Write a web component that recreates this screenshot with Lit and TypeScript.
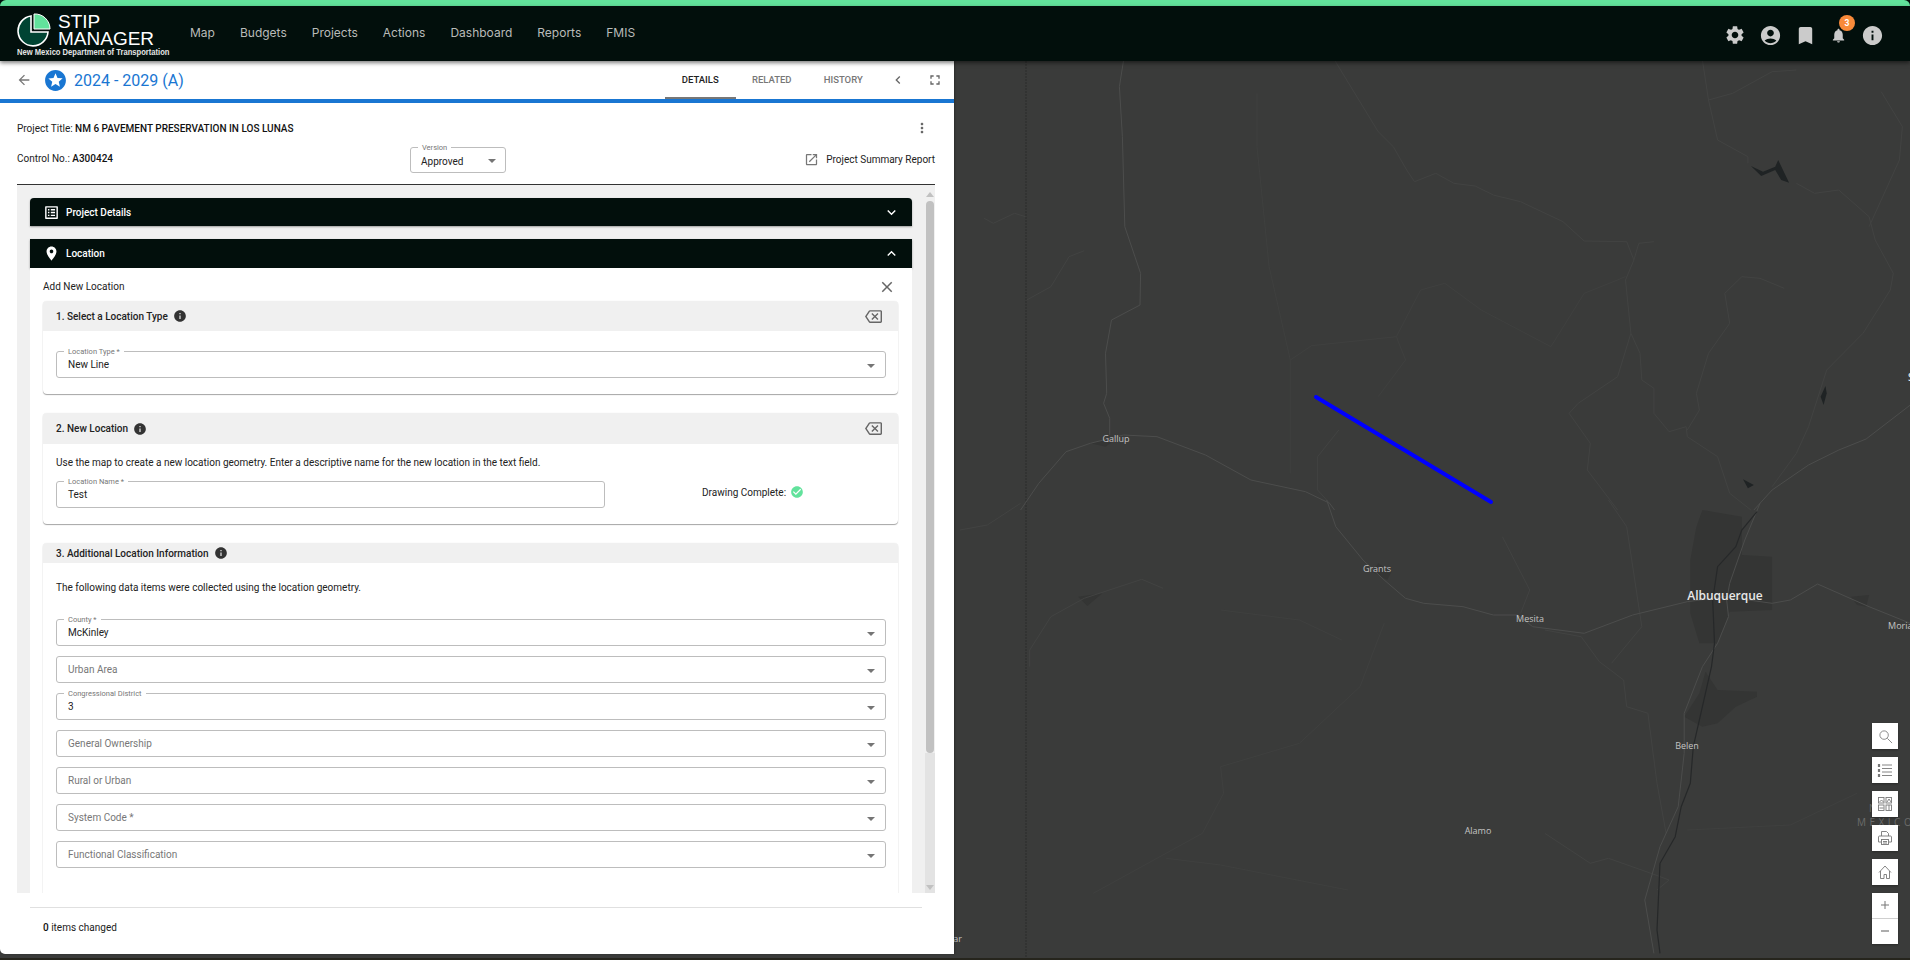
import { LitElement, css, html, svg } from 'lit';
import { customElement } from 'lit/decorators.js';

type Pt = [number, number];

// map traces were read off two crops, so each gets its own conversion to page px
const upper = (pts: Pt[]) => pts.map(([x, y]) => `${(960 + x / 1.65).toFixed(1)},${(60 + y / 3).toFixed(1)}`).join(' ');
const lower = (pts: Pt[]) => pts.map(([x, y]) => `${(960 + x / 1.65).toFixed(1)},${(500 + y / 3).toFixed(1)}`).join(' ');

const ROADS: string[] = [
   upper([[270, 0], [263, 80], [268, 230], [272, 500], [298, 640], [297, 735], [250, 780], [240, 880], [242, 1000], [237, 1030], [247, 1075], [247, 1125]]),
   upper([[100, 1350], [130, 1270], [175, 1175], [215, 1150], [270, 1125], [325, 1130], [405, 1185], [480, 1260], [570, 1295], [610, 1330], [618, 1350]]),
   lower([[605, 0], [620, 80], [665, 180], [700, 240], [735, 295], [765, 310], [830, 320], [880, 345], [920, 345], [945, 380], [1030, 400], [1110, 345], [1200, 305], [1262, 290], [1340, 310], [1370, 300], [1415, 252], [1500, 320], [1568, 370]]),
   upper([[1568, 1035], [1495, 1137], [1450, 1170], [1400, 1215], [1340, 1290], [1310, 1350]]),
   lower([[1320, 10], [1295, 120], [1270, 250], [1265, 300], [1268, 350], [1250, 430], [1225, 500], [1195, 640], [1195, 760], [1185, 920], [1155, 1040], [1130, 1200], [1145, 1360]]),
];

const RIVERS: string[] = [
   upper([[618, 0], [690, 215], [715, 260], [737, 330], [750, 365], [785, 340], [815, 370], [850, 378], [880, 405], [925, 425], [995, 485], [1030, 543], [1100, 545], [1112, 600], [1098, 660], [1107, 820], [1122, 880], [1125, 960], [1145, 985], [1145, 1060], [1170, 1115], [1198, 1100], [1200, 1130], [1250, 1190], [1270, 1300], [1305, 1350]]),
   upper([[1380, 370], [1410, 400], [1450, 390], [1500, 470], [1510, 540], [1540, 640], [1535, 690], [1490, 820], [1430, 930], [1400, 1100], [1380, 1180], [1340, 1280]]),
   upper([[1225, 0], [1235, 120], [1275, 100], [1340, 35], [1380, 30]]),
   upper([[1235, 120], [1250, 240], [1300, 290], [1300, 310]]),
   upper([[1520, 95], [1555, 200], [1550, 300], [1500, 500]]),
   upper([[1360, 685], [1320, 655], [1290, 650], [1262, 700], [1270, 790], [1235, 880], [1215, 1000], [1220, 1050], [1200, 1110]]),
   upper([[1112, 600], [1120, 550], [1145, 545]]),
   upper([[1107, 820], [1085, 950], [1020, 1030], [1005, 1060], [1040, 1150], [1035, 1230], [1085, 1350]]),
   upper([[205, 572], [180, 590], [150, 680], [110, 720]]),
   upper([[40, 475], [55, 490], [90, 460], [108, 470]]),
   upper([[625, 1110], [590, 1190], [590, 1290], [610, 1330]]),
   lower([[0, 90], [45, 75], [100, 10]]),
   lower([[205, 295], [300, 238], [335, 265]]),
   lower([[205, 295], [150, 350], [115, 450], [115, 500]]),
   lower([[895, 110], [940, 270], [925, 340]]),
   lower([[1075, 490], [1125, 380], [1100, 80], [1070, 0]]),
   lower([[965, 390], [1025, 410], [1055, 485], [1095, 540], [1100, 620], [1135, 640], [1150, 850], [1165, 1000]]),
   lower([[965, 1000], [1040, 1090], [1070, 1075], [1140, 1120], [1170, 1140], [1150, 1170]]),
];

// barely visible county and minor road traces
const FAINT: string[] = [
   upper([[545, 1240], [545, 900], [510, 620], [490, 260], [490, 100]]),
   upper([[760, 690], [800, 670], [860, 750], [975, 860]]),
   upper([[1098, 650], [1030, 700], [975, 860]]),
   upper([[545, 900], [580, 857], [720, 830], [760, 690]]),
   upper([[720, 830], [735, 900], [690, 1010]]),
   lower([[700, 370], [660, 560], [560, 730], [430, 800], [435, 880], [400, 1000], [220, 1180]]),
   lower([[430, 330], [560, 360], [630, 420]]),
   lower([[340, 1075], [430, 1095], [640, 1170]]),
   lower([[1200, 990], [1370, 975], [1480, 880]]),
];

const GRANDE = lower([[1315, 35], [1290, 90], [1280, 140], [1250, 200], [1242, 300], [1245, 430], [1240, 500], [1225, 620], [1210, 740], [1205, 850], [1190, 920], [1180, 1010], [1155, 1090], [1150, 1290], [1155, 1360]]);

const URBAN: string[] = [
   lower([[1225, 30], [1290, 50], [1290, 165], [1340, 170], [1340, 330], [1270, 335], [1250, 430], [1220, 430], [1205, 340], [1205, 180], [1215, 80]]),
   lower([[1230, 515], [1250, 570], [1315, 575], [1315, 590], [1280, 620], [1250, 670], [1225, 680], [1195, 650], [1220, 580]]),
   lower([[690, 190], [712, 215], [705, 240], [680, 215]]),
   lower([[195, 290], [235, 280], [210, 318]]),
   lower([[1470, 290], [1500, 285], [1495, 320], [1480, 315]]),
   upper([[215, 1150], [260, 1135], [240, 1160]]),
];

const LAKES: string[] = [
   upper([[1305, 318], [1325, 335], [1345, 320], [1350, 300], [1368, 368], [1355, 360], [1345, 330], [1322, 348]]),
   upper([[1428, 978], [1420, 1010], [1425, 1035], [1430, 1000]]),
   upper([[1292, 1258], [1310, 1275], [1300, 1285]]),
];

const LABELS: [string, number, number, number][] = [
   ['Gallup', 1116, 442, 9],
   ['Grants', 1377, 572, 9],
   ['Mesita', 1530, 622, 9],
   ['Moriarty', 1906, 629, 9],
   ['Belen', 1687, 749, 9],
   ['Alamo', 1478, 834, 9],
   ['Sugar', 950, 942, 9],
];

const icon = (d: string, size: number, cls = '') => html`<svg class=${cls} width=${size} height=${size} viewBox="0 0 24 24" fill="currentColor"><path d=${d}></path></svg>`;

const I = {
   gear: 'M19.14 12.94c.04-.3.06-.61.06-.94 0-.32-.02-.64-.07-.94l2.03-1.58c.18-.14.23-.41.12-.61l-1.92-3.32c-.12-.22-.37-.29-.59-.22l-2.39.96c-.5-.38-1.03-.7-1.62-.94l-.36-2.54c-.04-.24-.24-.41-.48-.41h-3.84c-.24 0-.43.17-.47.41l-.36 2.54c-.59.24-1.13.57-1.62.94l-2.39-.96c-.22-.08-.47 0-.59.22L2.74 8.87c-.12.21-.08.47.12.61l2.03 1.58c-.05.3-.09.63-.09.94s.02.64.07.94l-2.03 1.58c-.18.14-.23.41-.12.61l1.92 3.32c.12.22.37.29.59.22l2.39-.96c.5.38 1.03.7 1.62.94l.36 2.54c.05.24.24.41.48.41h3.84c.24 0 .44-.17.47-.41l.36-2.54c.59-.24 1.13-.56 1.62-.94l2.39.96c.22.08.47 0 .59-.22l1.92-3.32c.12-.22.07-.47-.12-.61l-2.01-1.58zM12 15.6c-1.98 0-3.6-1.62-3.6-3.6s1.62-3.6 3.6-3.6 3.6 1.62 3.6 3.6-1.62 3.6-3.6 3.6z',
   account: 'M12 2C6.48 2 2 6.48 2 12s4.48 10 10 10 10-4.48 10-10S17.52 2 12 2zm0 4c1.93 0 3.5 1.57 3.5 3.5S13.93 13 12 13s-3.5-1.57-3.5-3.5S10.07 6 12 6zm0 14c-2.03 0-4.43-.82-6.14-2.88C7.55 15.8 9.68 15 12 15s4.45.8 6.14 2.12C16.43 19.18 14.03 20 12 20z',
   bookmark: 'M17 3H7c-1.1 0-2 .9-2 2v16l7-3 7 3V5c0-1.1-.9-2-2-2z',
   bell: 'M12 22c1.1 0 2-.9 2-2h-4c0 1.1.9 2 2 2zm6-6v-5c0-3.07-1.63-5.64-4.5-6.32V4c0-.83-.67-1.5-1.5-1.5s-1.5.67-1.5 1.5v.68C7.64 5.36 6 7.92 6 11v5l-2 2v1h16v-1l-2-2z',
   info: 'M12 2C6.48 2 2 6.48 2 12s4.48 10 10 10 10-4.48 10-10S17.52 2 12 2zm1 15h-2v-6h2v6zm0-8h-2V7h2v2z',
   back: 'M20 11H7.83l5.59-5.59L12 4l-8 8 8 8 1.41-1.41L7.83 13H20v-2z',
   star: 'M11.99 2C6.47 2 2 6.48 2 12s4.47 10 9.99 10C17.52 22 22 17.52 22 12S17.52 2 11.99 2zm4.24 16L12 15.45 7.77 18l1.12-4.81-3.73-3.23 4.92-.42L12 5l1.92 4.53 4.92.42-3.73 3.23L16.23 18z',
   left: 'M15.41 7.41L14 6l-6 6 6 6 1.41-1.41L10.83 12z',
   full: 'M7 14H5v5h5v-2H7v-3zm-2-4h2V7h3V5H5v5zm12 7h-3v2h5v-5h-2v3zM14 5v2h3v3h2V5h-5z',
   more: 'M12 8c1.1 0 2-.9 2-2s-.9-2-2-2-2 .9-2 2 .9 2 2 2zm0 2c-1.1 0-2 .9-2 2s.9 2 2 2 2-.9 2-2-.9-2-2-2zm0 6c-1.1 0-2 .9-2 2s.9 2 2 2 2-.9 2-2-.9-2-2-2z',
   open: 'M19 19H5V5h7V3H5c-1.11 0-2 .9-2 2v14c0 1.1.89 2 2 2h14c1.1 0 2-.9 2-2v-7h-2v7zM14 3v2h3.59l-9.83 9.83 1.41 1.41L19 6.41V10h2V3h-7z',
   down: 'M16.59 8.59L12 13.17 7.41 8.59 6 10l6 6 6-6z',
   up: 'M12 8l-6 6 1.41 1.41L12 10.83l4.59 4.58L18 14z',
   close: 'M19 6.41L17.59 5 12 10.59 6.41 5 5 6.41 10.59 12 5 17.59 6.41 19 12 13.41 17.59 19 19 17.59 13.41 12z',
   clear: 'M22 3H7c-.69 0-1.23.35-1.59.88L0 12l5.41 8.11c.36.53.9.89 1.59.89h15c1.1 0 2-.9 2-2V5c0-1.1-.9-2-2-2zm0 16H7.07L2.4 12l4.66-7H22v14zm-11.59-2L14 13.41 17.59 17 19 15.59 15.41 12 19 8.41 17.59 7 14 10.59 10.41 7 9 8.41 12.59 12 9 15.59z',
   check: 'M12 2C6.48 2 2 6.48 2 12s4.48 10 10 10 10-4.48 10-10S17.52 2 12 2zm-2 15l-5-5 1.41-1.41L10 14.17l7.59-7.59L19 8l-9 9z',
   place: 'M12 2C8.13 2 5 5.13 5 9c0 5.25 7 13 7 13s7-7.75 7-13c0-3.87-3.13-7-7-7zm0 9.5c-1.38 0-2.5-1.12-2.5-2.5s1.12-2.5 2.5-2.5 2.5 1.12 2.5 2.5-1.12 2.5-2.5 2.5z',
   list: 'M19 5v14H5V5h14m1.1-2H3.9c-.5 0-.9.4-.9.9v16.2c0 .4.4.9.9.9h16.2c.4 0 .9-.5.9-.9V3.9c0-.5-.5-.9-.9-.9zM11 7h6v2h-6V7zm0 4h6v2h-6v-2zm0 4h6v2h-6v-2zM7 7h2v2H7V7zm0 4h2v2H7v-2zm0 4h2v2H7v-2z',
};

const NAV = ['Map', 'Budgets', 'Projects', 'Actions', 'Dashboard', 'Reports', 'FMIS'];

@customElement('app-root')
export class AppRoot extends LitElement {
   field(label: string, value = '', caret = true) {
      // no value means the label sits inside the box as a placeholder
      return html`
      <div class="field">
        ${value ? html`<span class="notch">${label}</span><span class="value">${value}</span>` : html`<span class="placeholder">${label}</span>`}
        ${caret ? html`<i class="caret"></i>` : ''}
      </div>`;
   }

   cardHead(title: string, clearable = true) {
      return html`
      <div class="card-head">
        <span>${title}</span>
        ${icon(I.info, 14, 'tip')}
        ${clearable ? icon(I.clear, 17, 'clear') : ''}
      </div>`;
   }

   renderMap() {
      return html`
      <svg class="map-art" viewBox="954 61 956 899" fill="none">
        ${URBAN.map(p => svg`<polygon points=${p} fill="#343534"></polygon>`)}
        <line x1="1026" y1="61" x2="1026" y2="960" stroke="#2b2c2b" stroke-dasharray="2 1"></line>
        ${FAINT.map(p => svg`<polyline points=${p} stroke="#3f403f" stroke-width="1"></polyline>`)}
        ${RIVERS.map(p => svg`<polyline points=${p} stroke="#424342" stroke-width="1"></polyline>`)}
        ${ROADS.map(p => svg`<polyline points=${p} stroke="#4c4d4c" stroke-width="1"></polyline>`)}
        <polyline points=${GRANDE} stroke="#262829" stroke-width="1.2"></polyline>
        ${LAKES.map(p => svg`<polygon points=${p} fill="#1f2324"></polygon>`)}
        <line x1="1316" y1="397" x2="1491" y2="502" stroke="#0000ff" stroke-width="4" stroke-linecap="round"></line>
        ${LABELS.map(([t, x, y, s]) => svg`<text x=${x} y=${y} font-size=${s} text-anchor="middle" class="place">${t}</text>`)}
        <text x="1725" y="600" font-size="12" text-anchor="middle" class="place big">Albuquerque</text>
        <text x="1908" y="381" font-size="10" class="place big">Santa Fe</text>
        <text x="1869" y="812" font-size="10" class="state">NEW</text>
        <text x="1857" y="826" font-size="10" class="state">MEXICO</text>
      </svg>`;
   }

   render() {
      return html`
      <div class="strip"></div>
      <header class="nav">
        <div class="logo">
          <div class="logo-top">
            <svg width="34" height="34" viewBox="0 0 34 34">
              <path d="M14 3A15 15 0 1 0 31 19H14Z" fill="#004433" stroke="#fff" stroke-width="1.6"></path>
              <path d="M17 1A15 15 0 0 1 33 16H17Z" fill="#62e29c" stroke="#fff" stroke-width="1"></path>
            </svg>
            <div class="wordmark"><span>STIP</span><span>MANAGER</span></div>
          </div>
          <div class="logo-sub">New Mexico Department of Transportation</div>
        </div>
        <nav class="links">${NAV.map(n => html`<a>${n}</a>`)}</nav>
        <div class="tools">
          ${icon(I.gear, 22)}
          ${icon(I.account, 23)}
          ${icon(I.bookmark, 23, 'mark')}
          <span class="bell">${icon(I.bell, 17)}<b class="badge">3</b></span>
          ${icon(I.info, 23)}
        </div>
      </header>

      <main class="main">
        <div class="map">
          ${this.renderMap()}
          <div class="widgets">
            <button class="w">
              <svg width="15" height="15" viewBox="0 0 16 16" fill="none" stroke="currentColor" stroke-width=".9"><circle cx="6.5" cy="6.5" r="4.5"></circle><path d="M10 10l5 5"></path></svg>
            </button>
            <button class="w">
              <svg width="16" height="16" viewBox="0 0 16 16" fill="none" stroke="currentColor" stroke-width=".9"><path d="M5 3h10M5 6.5h10M5 10h10M5 13.5h10"></path><path d="M2 2v3M2 7v3M2 12v3" stroke-width="2.2"></path></svg>
            </button>
            <button class="w">
              <svg width="16" height="16" viewBox="0 0 16 16" fill="none" stroke="currentColor" stroke-width=".9"><rect x="1.5" y="1.5" width="5.5" height="5.5"></rect><rect x="9" y="1.5" width="5.5" height="5.5"></rect><rect x="1.5" y="9" width="5.5" height="5.5"></rect><rect x="9" y="9" width="5.5" height="5.5"></rect><path d="M2.5 6l2-2 2 2M10 6l2-3 2 3M2.5 12h4M12 9v5"></path></svg>
            </button>
            <button class="w">
              <svg width="16" height="16" viewBox="0 0 16 16" fill="none" stroke="currentColor" stroke-width=".9"><path d="M4.5 6V1.5h5l2 2V6M4 12H1.5V7c0-.6.4-1 1-1h11c.6 0 1 .4 1 1v5H12"></path><rect x="4.5" y="9.5" width="7" height="5"></rect><path d="M6 11.5h4M6 13h4"></path></svg>
            </button>
            <button class="w">
              <svg width="16" height="16" viewBox="0 0 16 16" fill="none" stroke="currentColor" stroke-width=".9"><path d="M2 8.5L8 2l6 6.5M3.5 7v7.5h3.5v-4h2.5v4h3V7"></path></svg>
            </button>
            <div class="zoom">
              <button class="w"><svg width="12" height="12" viewBox="0 0 12 12" fill="none" stroke="currentColor"><path d="M6 2v8M2 6h8"></path></svg></button>
              <button class="w"><svg width="12" height="12" viewBox="0 0 12 12" fill="none" stroke="currentColor"><path d="M2 6h8" stroke-width="1.2"></path></svg></button>
            </div>
          </div>
        </div>

        <section class="panel">
          <div class="sub">
            ${icon(I.back, 16, 'back')}
            ${icon(I.star, 25, 'star')}
            <h1>2024 - 2029 (A)</h1>
            <div class="tabs">
              <a class="tab on">DETAILS</a>
              <a class="tab">RELATED</a>
              <a class="tab">HISTORY</a>
            </div>
            ${icon(I.left, 16, 'collapse')}
            ${icon(I.full, 16, 'expand')}
          </div>

          <div class="meta">
            <div class="title-row">
              <span>Project Title: <b>NM 6 PAVEMENT PRESERVATION IN LOS LUNAS</b></span>
              ${icon(I.more, 16, 'more')}
            </div>
            <div class="control-row">
              <span class="control">Control No.: <b>A300424</b></span>
              <div class="version">
                <span class="notch">Version</span><span class="value">Approved</span><i class="caret"></i>
              </div>
              <span class="report">${icon(I.open, 15)}Project Summary Report</span>
            </div>
          </div>

          <div class="well">
            <div class="scroll">
              <div class="acc">${icon(I.list, 17)}<span>Project Details</span>${icon(I.down, 17, 'chev')}</div>
              <div class="acc open">${icon(I.place, 17)}<span>Location</span>${icon(I.up, 17, 'chev')}</div>
              <div class="acc-body">
                <div class="add-row"><span>Add New Location</span>${icon(I.close, 18)}</div>

                <div class="card one">
                  ${this.cardHead('1. Select a Location Type')}
                  <div class="card-body">${this.field('Location Type *', 'New Line')}</div>
                </div>

                <div class="card two">
                  ${this.cardHead('2. New Location')}
                  <div class="card-body">
                    <p>Use the map to create a new location geometry. Enter a descriptive name for the new location in the text field.</p>
                    <div class="name-row">
                      ${this.field('Location Name *', 'Test', false)}
                      <span class="done">Drawing Complete: ${icon(I.check, 14)}</span>
                    </div>
                  </div>
                </div>

                <div class="card three">
                  ${this.cardHead('3. Additional Location Information', false)}
                  <div class="card-body">
                    <p>The following data items were collected using the location geometry.</p>
                    <div class="stack">
                      ${this.field('County *', 'McKinley')}
                      ${this.field('Urban Area')}
                      ${this.field('Congressional District', '3')}
                      ${this.field('General Ownership')}
                      ${this.field('Rural or Urban')}
                      ${this.field('System Code *')}
                      ${this.field('Functional Classification')}
                    </div>
                  </div>
                </div>
              </div>
            </div>
            <div class="bar">
              <i class="arrow-up"></i>
              <i class="thumb"></i>
              <i class="rest"></i>
              <i class="arrow-down"></i>
            </div>
          </div>

          <footer class="foot"><div><b>0</b> items changed</div></footer>
        </section>
        <div class="edge"></div>
      </main>
      `;
   }

   static styles = css`
  :host {
    display: flex;
    flex-direction: column;
    width: 100vw;
    height: 100vh;
    overflow: hidden;
    background: #020f0c;
    font-family: Roboto, "Liberation Sans", sans-serif;
    font-size: 10px;
    color: #222;
  }
  svg { display: block; flex: none; }

  .strip {
    height: 6px;
    flex: none;
    background: #62e29c;
    border-radius: 6px 6px 0 0;
  }
  .nav {
    position: relative;
    z-index: 3;
    height: 55px;
    flex: none;
    display: flex;
    background: #020f0c;
    box-shadow: 0 2px 4px rgba(0, 0, 0, 0.5);
  }
  .logo {
    width: 173px;
    padding: 7px 0 0 17px;
    box-sizing: content-box;
    flex: none;
    color: #fff;
    font-family: "Liberation Sans", sans-serif;
  }
  .logo-top { display: flex; height: 33px; gap: 7px; }
  .wordmark {
    display: flex;
    flex-direction: column;
    font-size: 19px;
    line-height: 17px;
  }
  .logo-sub {
    font-size: 9.5px;
    font-weight: 700;
    line-height: 12px;
    white-space: nowrap;
    color: #e6e6e6;
    transform: scaleX(0.8);
    transform-origin: left center;
  }
  .links {
    display: flex;
    align-items: center;
    gap: 25px;
    height: 55px;
    font-family: Inter, Roboto, sans-serif;
    font-size: 12px;
    color: #b9bbb9;
    margin-top: -1px;
  }
  .tools {
    margin-left: auto;
    display: flex;
    align-items: center;
    gap: 13px;
    padding-right: 26px;
    color: #cbcbcb;
    height: 58px;
  }
  .mark { margin-left: -1px; }
  .bell { position: relative; margin-right: 1px; }
  .badge {
    position: absolute;
    left: 9px;
    top: -12px;
    width: 16px;
    height: 16px;
    border-radius: 50%;
    background: #f98a3a;
    color: #fff;
    font-size: 8.5px;
    font-weight: 700;
    line-height: 16px;
    text-align: center;
  }

  .main { position: relative; flex: 1; min-height: 0; background: #3a3b3a; }
  .map { position: absolute; inset: 0 0 0 954px; overflow: hidden; }
  .map-art { position: absolute; left: 0; top: 0; width: 956px; height: 899px; }
  .place {
    fill: #c4c4c4;
    font-family: "Open Sans", "Noto Sans", sans-serif;
  }
  .place.big { fill: #e8e8e8; font-weight: 600; }
  .state {
    fill: #6b6c6b;
    font-family: "Open Sans", sans-serif;
    letter-spacing: 3.5px;
  }
  .widgets {
    position: absolute;
    left: 918px;
    top: 662px;
    width: 26px;
    display: flex;
    flex-direction: column;
    gap: 8px;
  }
  .w {
    width: 26px;
    height: 26px;
    padding: 0;
    border: 0;
    background: #fff;
    color: #777;
    display: flex;
    align-items: center;
    justify-content: center;
    box-shadow: 0 1px 2px rgba(0, 0, 0, 0.3);
  }
  .zoom { display: flex; flex-direction: column; }
  .zoom .w { height: 25.5px; }
  .zoom .w:first-child { border-bottom: 1px solid #d4d4d4; }
  .edge {
    position: absolute;
    left: 0;
    right: 0;
    bottom: 0;
    height: 2px;
    background: #26251d;
  }

  .panel {
    position: relative;
    z-index: 2;
    width: 954px;
    height: 893px;
    display: flex;
    flex-direction: column;
    background: #fff;
    border-bottom-left-radius: 5px;
    box-shadow: 1px 0 2px rgba(0, 0, 0, 0.25);
  }
  .sub {
    height: 38px;
    flex: none;
    display: flex;
    align-items: center;
    border-bottom: 4px solid #1976d2;
  }
  .back { color: #777; margin-left: 16px; }
  .star { color: #1976d2; margin-left: 11px; }
  h1 {
    margin: 0 0 0 6px;
    font-size: 16px;
    font-weight: 400;
    color: #1976d2;
  }
  .tabs { margin-left: auto; display: flex; align-self: stretch; }
  .tab {
    width: 71.5px;
    display: flex;
    align-items: center;
    justify-content: center;
    border-bottom: 2px solid transparent;
    font-size: 9.5px;
    font-weight: 500;
    color: #777;
  }
  .tab.on { color: #222; border-bottom-color: #777; }
  .collapse { color: #666; margin-left: 11px; }
  .expand { color: #666; margin-left: 21px; margin-right: 11px; }

  .meta { flex: none; padding: 15px 19px 11px 17px; }
  b { font-weight: 500; color: #111; }
  .title-row {
    height: 20px;
    display: flex;
    align-items: center;
    justify-content: space-between;
  }
  .more { color: #666; margin-right: 5px; }
  .control-row {
    margin-top: 9px;
    height: 26px;
    display: grid;
    grid-template-columns: 393px 96px 1fr;
    align-items: center;
  }
  .control { margin-bottom: 4px; }
  .report {
    justify-self: end;
    display: flex;
    align-items: center;
    gap: 7px;
    margin-bottom: 2px;
  }
  .report svg { color: #777; }

  .well {
    flex: 1;
    min-height: 0;
    margin: 0 19px 0 17px;
    display: flex;
    background: #f0f0f0;
    border-top: 1px solid #333;
  }
  .scroll { flex: 1; min-width: 0; overflow: hidden; padding: 13px 13px 0 13px; }
  .bar { width: 10px; flex: none; display: flex; flex-direction: column; align-items: center; }
  .bar .thumb { width: 8px; height: 552px; background: #c1c1c1; border-radius: 4px; margin-top: 4px; }
  .bar .rest { flex: 1; align-self: stretch; background: #e3e3e3; }
  .arrow-up, .arrow-down { width: 0; height: 0; border: 4px solid transparent; flex: none; }
  .arrow-up { border-bottom: 5px solid #c1c1c1; border-top-width: 0; margin-top: 7px; }
  .arrow-down { border-top: 5px solid #c1c1c1; border-bottom-width: 0; margin: -8px 0 3px; }

  .acc {
    height: 28px;
    display: flex;
    align-items: center;
    gap: 6px;
    padding: 0 12px 0 13px;
    margin-bottom: 13px;
    background: #020f0c;
    color: #fff;
    border-radius: 4px 4px 0 0;
    box-shadow: 0 1px 2px rgba(0, 0, 0, 0.35);
    font-weight: 500;
  }
  .acc.open { height: 29px; margin-bottom: 0; border-radius: 0; }
  .chev { margin-left: auto; }
  .acc-body { background: #fff; padding: 0 14px 0 13px; }
  .add-row {
    height: 33px;
    padding-top: 4px;
    box-sizing: border-box;
    display: flex;
    align-items: center;
    justify-content: space-between;
    padding-right: 2px;
  }
  .add-row svg { color: #666; }

  .card {
    margin-bottom: 19px;
    background: #fff;
    border-radius: 4px;
    box-shadow: 0 1px 1px rgba(0, 0, 0, 0.35), 0 0 1px rgba(0, 0, 0, 0.12);
  }
  .card-head {
    display: flex;
    align-items: center;
    gap: 5px;
    padding: 0 16px 0 13px;
    background: #f0f0f0;
    border-radius: 4px 4px 0 0;
    font-weight: 500;
    color: #222;
    height: 30px;
  }
  .two .card-head { height: 31px; }
  .three .card-head { height: 20px; }
  .tip { color: #333; }
  .clear { margin-left: auto; color: #666; }
  .card-body { padding: 0 12px 16px 13px; }
  .one .card-body { padding-top: 20px; }
  p { margin: 0; line-height: 14px; }
  .two p { padding-top: 12px; }
  .three p { padding-top: 18px; }

  .field, .version {
    position: relative;
    height: 27px;
    box-sizing: border-box;
    display: flex;
    align-items: center;
    padding: 0 11px;
    border: 1px solid #bdbdbd;
    border-radius: 3px;
  }
  .version { height: 26px; padding: 2px 10px 0; }
  .notch {
    position: absolute;
    left: 7px;
    top: -5px;
    padding: 0 4px;
    background: #fff;
    font-size: 7.5px;
    line-height: 9px;
    color: #777;
  }
  .value { color: #222; }
  .placeholder { color: #777; }
  .caret {
    position: absolute;
    right: 10px;
    top: 50%;
    margin-top: -1px;
    border: 4px solid transparent;
    border-top: 4px solid #757575;
    border-bottom-width: 0;
  }
  .version .caret { right: 9px; }
  .name-row { display: flex; margin-top: 11px; }
  .name-row .field { width: 549px; flex: none; }
  .done {
    margin-left: 97px;
    display: flex;
    align-items: center;
    gap: 4px;
    height: 22px;
  }
  .done svg { color: #62e29c; }
  .stack { margin-top: 24px; display: flex; flex-direction: column; gap: 10px; padding-bottom: 30px; }

  .foot { flex: none; height: 61px; padding: 14px 32px 0 30px; box-sizing: border-box; }
  .foot div { height: 42px; border-top: 1px solid #e0e0e0; padding: 14px 0 0 13px; box-sizing: border-box; }
  `;
}

declare global {
   interface HTMLElementTagNameMap {
      'app-root': AppRoot;
   }
};
